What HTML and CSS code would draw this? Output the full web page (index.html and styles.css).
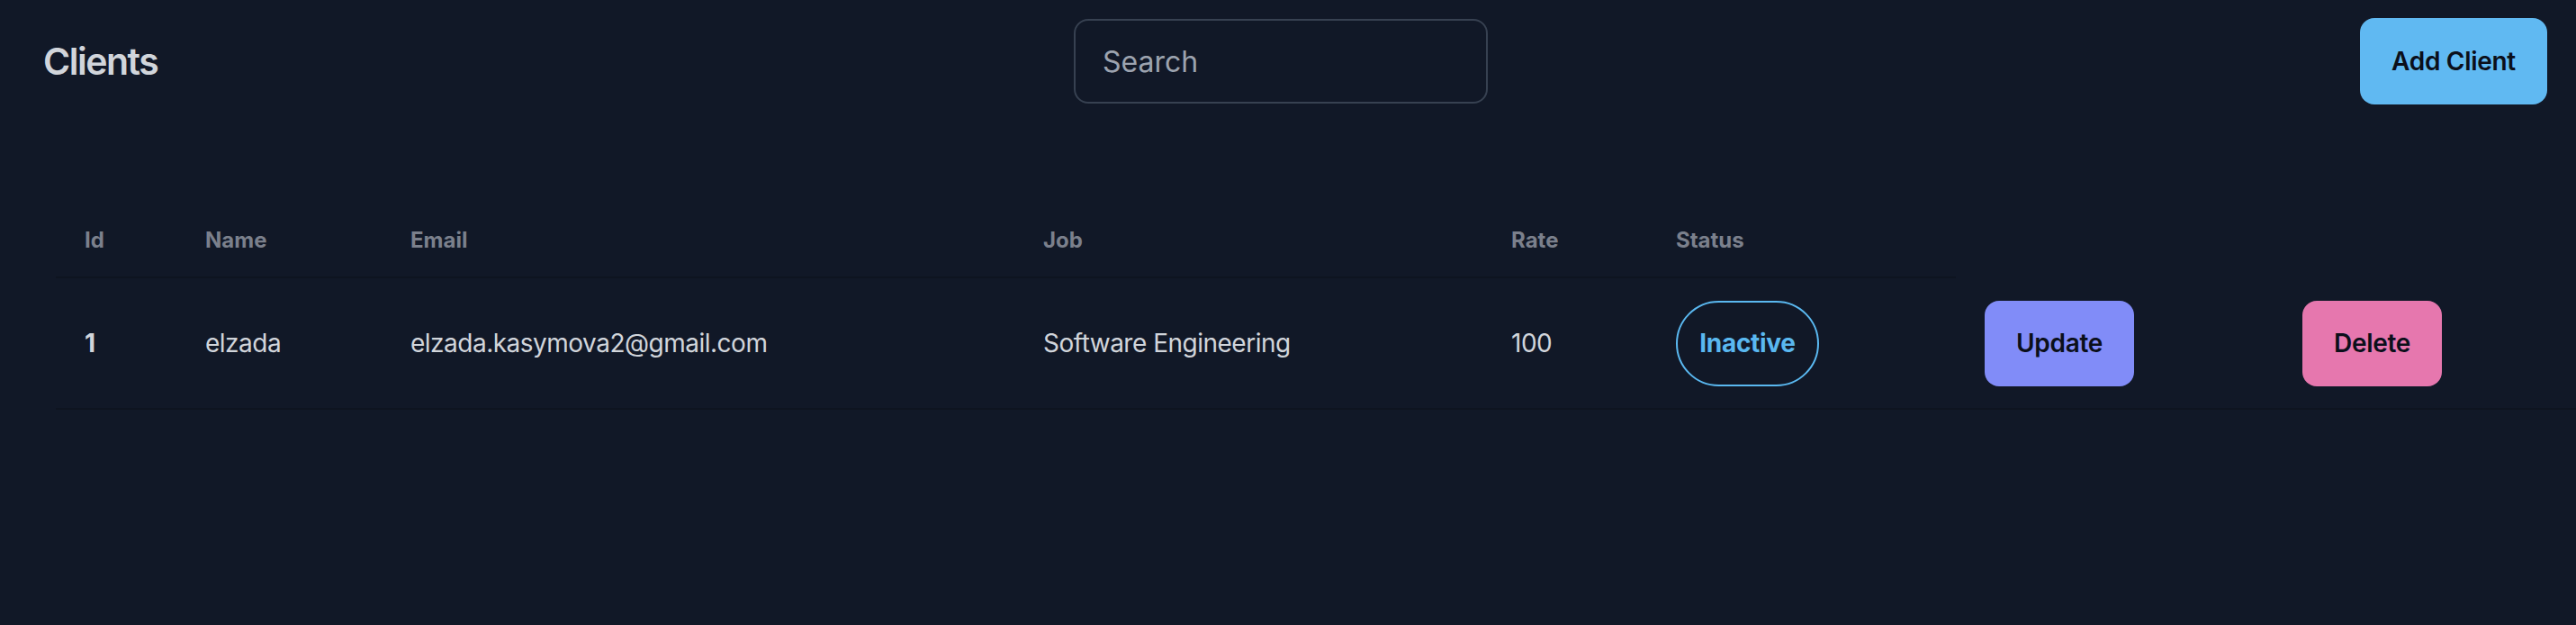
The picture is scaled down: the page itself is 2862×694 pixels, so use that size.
FILE: index.html
```html
<!DOCTYPE html>
<html lang="en">
<head>
<meta charset="utf-8">
<title>Clients</title>
<link rel="stylesheet" href="styles.css">
</head>
<body>
  <header class="topbar">
    <h1 class="title">Clients</h1>
    <input class="search" type="text" placeholder="Search">
    <button class="btn btn-add">Add Client</button>
  </header>

  <table class="clients">
    <colgroup>
      <col class="c-id">
      <col class="c-name">
      <col class="c-email">
      <col class="c-job">
      <col class="c-rate">
      <col class="c-status">
      <col class="c-update">
      <col class="c-delete">
    </colgroup>
    <thead>
      <tr>
        <th>Id</th>
        <th>Name</th>
        <th>Email</th>
        <th>Job</th>
        <th>Rate</th>
        <th>Status</th>
      </tr>
    </thead>
    <tbody>
      <tr>
        <td class="id">1</td>
        <td>elzada</td>
        <td>elzada.kasymova2@gmail.com</td>
        <td>Software Engineering</td>
        <td>100</td>
        <td><span class="badge">Inactive</span></td>
        <td><button class="btn btn-update">Update</button></td>
        <td><button class="btn btn-delete">Delete</button></td>
      </tr>
    </tbody>
  </table>
</body>
</html>
```

FILE: styles.css
```css
html, body {
  margin: 0;
  padding: 0;
  background: #111827;
}
body {
  font-family: Inter, "Noto Sans", "Liberation Sans", sans-serif;
  color: #d1d5db;
  overflow: hidden;
  width: 2862px;
  height: 694px;
}

.topbar {
  display: grid;
  grid-template-columns: 1145px 460px 1fr;
  align-items: center;
  height: 96px;
  padding: 20px 32px 0 48px;
}
.title {
  margin: 0;
  font-size: 41px;
  font-weight: 600;
  letter-spacing: -1.5px;
  color: #d1d5db;
  line-height: normal;
}
.search {
  box-sizing: border-box;
  width: 460px;
  height: 94px;
  border: 2px solid #374151;
  border-radius: 16px;
  background: #111827;
  padding: 0 30px;
  font-family: inherit;
  font-size: 32px;
  color: #d1d5db;
  outline: none;
}
.search::placeholder {
  color: #9ca3af;
}

.btn {
  box-sizing: border-box;
  height: 96px;
  padding: 0 32px;
  border: none;
  border-radius: 16px;
  font-family: inherit;
  font-size: 28px;
  font-weight: 600;
  letter-spacing: -0.3px;
  color: #0b0f1a;
  cursor: pointer;
}
.btn-add {
  justify-self: end;
  width: 208px;
  background: #60b9f2;
}
.btn-update {
  height: 95px;
  width: 166px;
  background: #818cf8;
}
.btn-delete {
  height: 95px;
  width: 155px;
  background: #e677ae;
}

.clients {
  margin: 111px 0 0 62px;
  width: 2800px;
  table-layout: fixed;
  border-collapse: separate;
  border-spacing: 0;
}
.c-id { width: 134px; }
.c-name { width: 228px; }
.c-email { width: 703px; }
.c-job { width: 520px; }
.c-rate { width: 183px; }
.c-status { width: 343px; }
.c-update { width: 353px; }
.c-delete { width: 336px; }

.clients th {
  text-align: left;
  padding: 24px 32px;
  line-height: 32px;
  font-size: 24px;
  font-weight: 700;
  color: #7b808c;
  border-bottom: 2px solid #0e1420;
}
.clients td {
  padding: 24px 32px;
  height: 96px;
  font-size: 28px;
  letter-spacing: -0.5px;
  color: #d1d5db;
  vertical-align: middle;
  white-space: nowrap;
  border-bottom: 2px solid #0e1420;
}
.clients td.id {
  font-weight: 700;
}

.badge {
  box-sizing: border-box;
  display: inline-flex;
  align-items: center;
  justify-content: center;
  width: 159px;
  height: 95px;
  border: 2px solid #5ab8f0;
  border-radius: 48px;
  color: #5ab8f0;
  font-size: 28px;
  font-weight: 700;
  letter-spacing: -0.3px;
}
```
